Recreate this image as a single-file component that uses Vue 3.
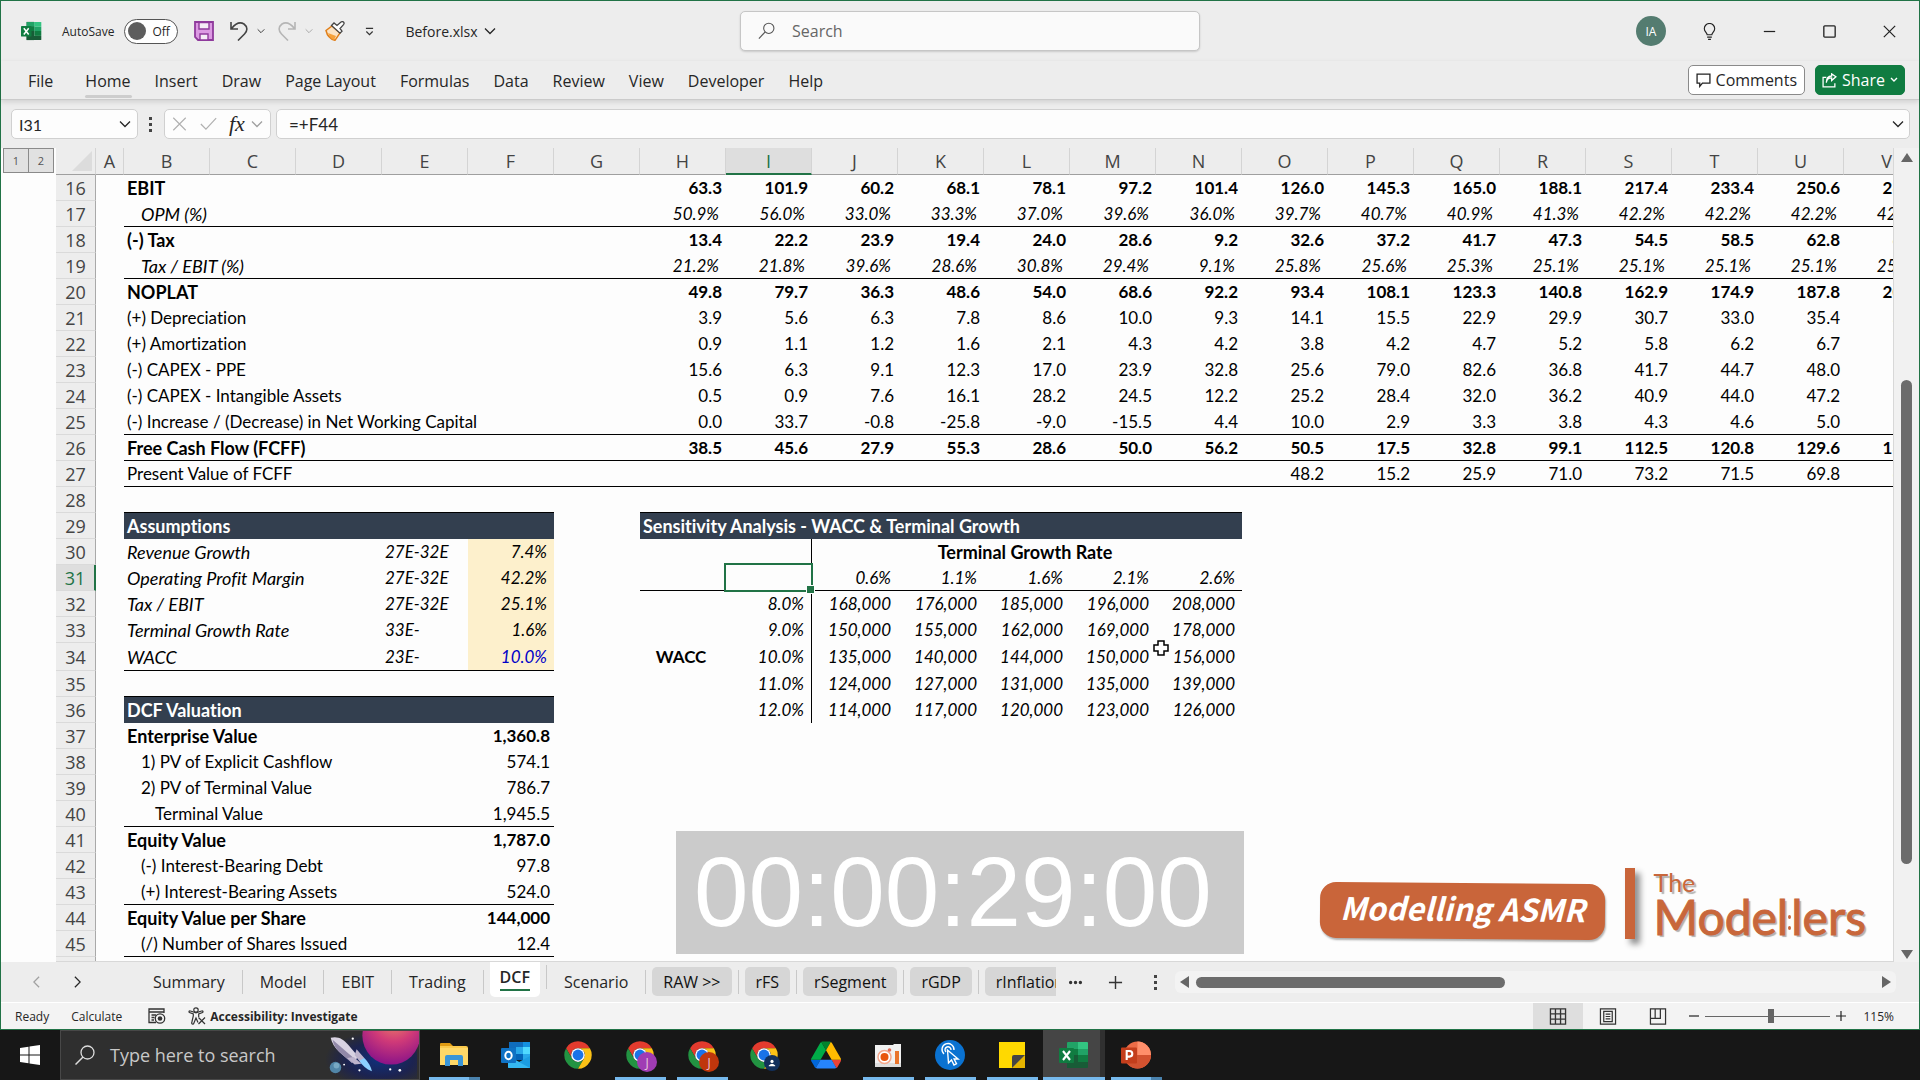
<script setup>
import { ref } from 'vue'

const autoSave = ref(false)
const search = ref('')
const cellName = ref('I31')
const formula = ref('=+F44')
const zoom = ref(115)

const menus = ['File', 'Home', 'Insert', 'Draw', 'Page Layout', 'Formulas', 'Data', 'Review', 'View', 'Developer', 'Help']

const sheets = [
  { name: 'Summary' },
  { name: 'Model' },
  { name: 'EBIT' },
  { name: 'Trading' },
  { name: 'DCF', active: true },
  { name: 'Scenario' },
  { name: 'RAW >>', raw: true },
  { name: 'rFS', raw: true },
  { name: 'rSegment', raw: true },
  { name: 'rGDP', raw: true },
  { name: 'rInflation', raw: true }
]

const apps = [
  { icon: 'explorer', label: 'File Explorer', running: true, stacked: true },
  { icon: 'outlook', label: 'Outlook' },
  { icon: 'chrome', label: 'Chrome' },
  { icon: 'chrome', label: 'Chrome profile 1', running: true, badge: 'J', color: 'purple' },
  { icon: 'chrome', label: 'Chrome profile 2', running: true, badge: 'J', color: 'rust' },
  { icon: 'chrome', label: 'Chrome profile 3', person: true },
  { icon: 'drive', label: 'Google Drive' },
  { icon: 'recorder', label: 'Screen recorder', running: true },
  { icon: 'clicker', label: 'Click tool', running: true },
  { icon: 'notes', label: 'Sticky Notes', running: true },
  { icon: 'excel', label: 'Excel', running: true, active: true },
  { icon: 'ppt', label: 'PowerPoint', running: true, stacked: true }
]

const columns = 'ABCDEFGHIJKLMNOPQRSTUV'.split('')
const series = columns.slice(7)
const between = (col, a, b) => col >= a && col <= b

function line(n, label, values, opts = {}) {
  const cells = { B: label }
  const start = series.length - values.length
  values.forEach((v, i) => { cells[series[start + i]] = v })
  return { n, cells, ...opts }
}

const rows = [
  line(16, 'EBIT', ['63.3', '101.9', '60.2', '68.1', '78.1', '97.2', '101.4', '126.0', '145.3', '165.0', '188.1', '217.4', '233.4', '250.6', '268.8'], { bold: true }),
  line(17, 'OPM (%)', ['50.9%', '56.0%', '33.0%', '33.3%', '37.0%', '39.6%', '36.0%', '39.7%', '40.7%', '40.9%', '41.3%', '42.2%', '42.2%', '42.2%', '42.2%'], { italic: true, indent: 1, rule: 'full' }),
  line(18, '(-) Tax', ['13.4', '22.2', '23.9', '19.4', '24.0', '28.6', '9.2', '32.6', '37.2', '41.7', '47.3', '54.5', '58.5', '62.8', '67.4'], { bold: true }),
  line(19, 'Tax / EBIT (%)', ['21.2%', '21.8%', '39.6%', '28.6%', '30.8%', '29.4%', '9.1%', '25.8%', '25.6%', '25.3%', '25.1%', '25.1%', '25.1%', '25.1%', '25.1%'], { italic: true, indent: 1, rule: 'full' }),
  line(20, 'NOPLAT', ['49.8', '79.7', '36.3', '48.6', '54.0', '68.6', '92.2', '93.4', '108.1', '123.3', '140.8', '162.9', '174.9', '187.8', '201.4'], { bold: true }),
  line(21, '(+) Depreciation', ['3.9', '5.6', '6.3', '7.8', '8.6', '10.0', '9.3', '14.1', '15.5', '22.9', '29.9', '30.7', '33.0', '35.4', '38.0']),
  line(22, '(+) Amortization', ['0.9', '1.1', '1.2', '1.6', '2.1', '4.3', '4.2', '3.8', '4.2', '4.7', '5.2', '5.8', '6.2', '6.7', '7.2']),
  line(23, '(-) CAPEX - PPE', ['15.6', '6.3', '9.1', '12.3', '17.0', '23.9', '32.8', '25.6', '79.0', '82.6', '36.8', '41.7', '44.7', '48.0', '51.5']),
  line(24, '(-) CAPEX - Intangible Assets', ['0.5', '0.9', '7.6', '16.1', '28.2', '24.5', '12.2', '25.2', '28.4', '32.0', '36.2', '40.9', '44.0', '47.2', '50.7']),
  line(25, '(-) Increase / (Decrease) in Net Working Capital', ['0.0', '33.7', '-0.8', '-25.8', '-9.0', '-15.5', '4.4', '10.0', '2.9', '3.3', '3.8', '4.3', '4.6', '5.0', '5.3'], { rule: 'full' }),
  line(26, 'Free Cash Flow (FCFF)', ['38.5', '45.6', '27.9', '55.3', '28.6', '50.0', '56.2', '50.5', '17.5', '32.8', '99.1', '112.5', '120.8', '129.6', '139.1'], { bold: true, rule: 'full' }),
  line(27, 'Present Value of FCFF', ['48.2', '15.2', '25.9', '71.0', '73.2', '71.5', '69.8', '68.1'], { rule: 'full' }),
  { n: 28, cells: {}, rule: 'both' },
  { n: 29, cells: { B: 'Assumptions', H: 'Sensitivity Analysis - WACC & Terminal Growth' }, band: 'both' },
  { n: 30, cells: { B: 'Revenue Growth', E: '27E-32E', F: '7.4%', J: 'Terminal Growth Rate' }, italic: true },
  { n: 31, cells: { B: 'Operating Profit Margin', E: '27E-32E', F: '42.2%', J: '0.6%', K: '1.1%', L: '1.6%', M: '2.1%', N: '2.6%' }, italic: true, rule: 'right' },
  { n: 32, cells: { B: 'Tax / EBIT', E: '27E-32E', F: '25.1%', I: '8.0%', J: '168,000', K: '176,000', L: '185,000', M: '196,000', N: '208,000' }, italic: true },
  { n: 33, cells: { B: 'Terminal Growth Rate', E: '33E-', F: '1.6%', I: '9.0%', J: '150,000', K: '155,000', L: '162,000', M: '169,000', N: '178,000' }, italic: true },
  { n: 34, cells: { B: 'WACC', E: '23E-', F: '10.0%', H: 'WACC', I: '10.0%', J: '135,000', K: '140,000', L: '144,000', M: '150,000', N: '156,000' }, italic: true, rule: 'left', tall: true },
  { n: 35, cells: { I: '11.0%', J: '124,000', K: '127,000', L: '131,000', M: '135,000', N: '139,000' }, italic: true, rule: 'left' },
  { n: 36, cells: { B: 'DCF Valuation', I: '12.0%', J: '114,000', K: '117,000', L: '120,000', M: '123,000', N: '126,000' }, italic: true, band: 'left' },
  { n: 37, cells: { B: 'Enterprise Value', F: '1,360.8' }, bold: true },
  { n: 38, cells: { B: '1) PV of Explicit Cashflow', F: '574.1' }, indent: 1 },
  { n: 39, cells: { B: '2) PV of Terminal Value', F: '786.7' }, indent: 1 },
  { n: 40, cells: { B: 'Terminal Value', F: '1,945.5' }, indent: 2, rule: 'left' },
  { n: 41, cells: { B: 'Equity Value', F: '1,787.0' }, bold: true },
  { n: 42, cells: { B: '(-) Interest-Bearing Debt', F: '97.8' }, indent: 1 },
  { n: 43, cells: { B: '(+) Interest-Bearing Assets', F: '524.0' }, indent: 1, rule: 'left' },
  { n: 44, cells: { B: 'Equity Value per Share', F: '144,000' }, bold: true },
  { n: 45, cells: { B: '(/) Number of Shares Issued', F: '12.4' }, indent: 1, rule: 'left' },
  { n: 46, cells: {} }
]

// the growth-rate caption on row 30 is merged across J:N
const rowColumns = (row) => columns.filter((c) => !(row.n === 30 && between(c, 'K', 'N')))

function inBlock(kind, col) {
  if (kind === 'full') return col >= 'B'
  const left = between(col, 'B', 'F')
  const right = between(col, 'H', 'N')
  return (kind === 'left' && left) || (kind === 'right' && right) || (kind === 'both' && (left || right))
}

function cellClass(row, col) {
  const band = inBlock(row.band, col)
  const caption = (row.n === 30 && col === 'J') || (row.n === 34 && col === 'H')
  return {
    label: (col === 'B' && (row.bold || row.italic)) || band || (caption && col === 'J'),
    bold: row.bold || band || caption,
    italic: row.italic && !band && !caption,
    num: !['B', 'E'].includes(col) && !band && !caption,
    spaced: row.italic && col >= 'F',
    caption,
    band,
    rule: inBlock(row.rule, col),
    divider: col === 'I' && between(row.n, 30, 36),
    input: col === 'F' && between(row.n, 30, 34),
    blue: col === 'F' && row.n === 34,
    indent1: col === 'B' && row.indent === 1,
    indent2: col === 'B' && row.indent === 2,
    selected: col === 'I' && row.n === 31
  }
}
</script>

<template>
  <div class="desktop">
    <svg class="defs" aria-hidden="true">
      <symbol id="chev" viewBox="0 0 12 8"><path d="M1 1.5 6 6.5 11 1.5" fill="none" stroke="currentColor" stroke-width="1.3" /></symbol>
      <symbol id="excel" viewBox="0 0 30 28">
        <path d="M8 1h11v26H8z" fill="#185c37" /><path d="M8 2a1 1 0 0 1 1-1h10v7H8z" fill="#21a366" />
        <path d="M19 1h9a1 1 0 0 1 1 1v6H19z" fill="#33c481" /><path d="M8 8h11v6H8z" fill="#107c41" /><path d="M19 8h10v6H19z" fill="#21a366" />
        <path d="M19 14h10v7H19z" fill="#107c41" /><path d="M8 21h21v5a1 1 0 0 1-1 1H9a1 1 0 0 1-1-1z" fill="#185c37" />
        <rect x="0" y="7" width="15" height="15" rx="1" fill="#107c41" />
        <path d="m4 10 7 9M11 10l-7 9" stroke="#fff" stroke-width="2.1" />
      </symbol>
      <symbol id="explorer" viewBox="0 0 30 28">
        <path d="M1 3a1 1 0 0 1 1-1h9l3 3H1z" fill="#e09b13" /><path d="M1 5h26a2 2 0 0 1 2 2v17H1z" fill="#fbc94b" />
        <path d="M1 7h28v17H1z" fill="#ffd868" /><path d="M6 25V16a2 2 0 0 1 2-2h14a2 2 0 0 1 2 2v9h-5v-6h-8v6z" fill="#3a95d8" />
      </symbol>
      <symbol id="outlook" viewBox="0 0 30 28">
        <path d="M8 1h20a1 1 0 0 1 1 1v16H8z" fill="#0f6cbd" /><path d="M15 6h7v7h-7z" fill="#28a8ea" /><path d="M22 1h7v6h-7z" fill="#1490df" />
        <path d="M22 6h7v7h-7z" fill="#50d9ff" /><path d="M15 13h7v6h-7z" fill="#0364b8" /><path d="M22 13h7v6h-7z" fill="#28a8ea" />
        <path d="M7 15l11 6 11-6v12H8a1 1 0 0 1-1-1z" fill="#1b9de2" /><path d="m7 15 22 12H8a1 1 0 0 1-1-1z" fill="#35b8f1" />
        <rect y="7" width="15" height="15" rx="1" fill="#0f72c4" /><ellipse cx="7.500" cy="14.500" rx="3.200" ry="3.700" fill="none" stroke="#fff" stroke-width="2" />
      </symbol>
      <symbol id="chrome" viewBox="0 0 48 48">
        <path d="M4.950 13A22 22 0 0 1 43.050 13H24A11 11 0 0 0 14.470 29.500z" fill="#e33b2e" />
        <path d="M4.950 13 14.470 29.500A11 11 0 0 0 33.530 29.500L24 46A22 22 0 0 1 4.950 13z" fill="#229342" />
        <path d="M43.050 13A22 22 0 0 1 24 46L33.530 29.500A11 11 0 0 0 24 13z" fill="#fbc116" />
        <circle cx="24" cy="24" r="11" fill="#fff" /><circle cx="24" cy="24" r="8.700" fill="#1a73e8" />
      </symbol>
      <symbol id="drive" viewBox="0 0 87 78">
        <path d="m6.600 66.850 3.850 6.650c.8 1.400 1.950 2.500 3.300 3.300L27.500 53H0c0 1.550.4 3.100 1.200 4.500z" fill="#0066da" />
        <path d="M43.650 25 29.900 1.200c-1.350.8-2.500 1.900-3.300 3.300L1.200 48.500A9.060 9.060 0 0 0 0 53h27.500z" fill="#00ac47" />
        <path d="M73.550 76.800c1.350-.8 2.500-1.900 3.300-3.300l9.250-16c.8-1.400 1.200-2.950 1.200-4.500H59.800l5.850 11.500z" fill="#ea4335" />
        <path d="M43.650 25 57.400 1.200C56.050.4 54.500 0 52.900 0H34.400c-1.600 0-3.150.45-4.500 1.200z" fill="#00832d" />
        <path d="M59.800 53H27.500L13.750 76.800c1.350.8 2.900 1.200 4.500 1.200h50.800c1.600 0 3.150-.45 4.500-1.200z" fill="#2684fc" />
        <path d="M73.400 26.500 60.700 4.500c-.8-1.400-1.950-2.500-3.300-3.300L43.650 25 59.800 53h27.450c0-1.550-.4-3.100-1.200-4.500z" fill="#ffba00" />
      </symbol>
      <symbol id="recorder" viewBox="0 0 30 28">
        <path d="M2 4h18l1-1h7v23H2z" fill="#f1f1f1" /><path d="M2 22h26v4H2z" fill="#ddd" />
        <circle cx="11.500" cy="16" r="6.500" fill="#fff" stroke="#f4a78c" stroke-width="1.500" /><circle cx="11.500" cy="16" r="4" fill="#e8560e" />
        <circle cx="16.500" cy="9" r="1.800" fill="#e26a54" /><path d="M22 10h4v13h-4z" fill="#e9742b" />
      </symbol>
      <symbol id="clicker" viewBox="0 0 30 30">
        <circle cx="15" cy="15" r="15" fill="#0a72d1" />
        <path d="M9 14a6 6 0 1 1 10-4M11 12a3 3 0 1 1 5-2" fill="none" stroke="#fff" stroke-width="1.400" />
        <path d="m12.500 10 1 13 3-3 2.500 5 2.500-1.200-2.400-4.800h4z" fill="#0a72d1" stroke="#fff" stroke-width="1.400" />
      </symbol>
      <symbol id="notes" viewBox="0 0 30 28"><path d="M2 1h26v14L17 27H2z" fill="#ffd900" /><path d="M28 14v13H15z" fill="#e5b400" /><path d="M28 14H17a2 2 0 0 0-2 2v11z" fill="#454545" /></symbol>
      <symbol id="ppt" viewBox="0 0 30 30">
        <circle cx="16.500" cy="15" r="13.500" fill="#ed6c47" /><path d="M16.500 1.500A13.500 13.500 0 0 1 30 15H16.500z" fill="#ff8f6b" /><path d="M3 15h27a13.500 13.500 0 0 1-27 0z" fill="#d35230" />
        <rect y="7.500" width="16" height="16" rx="1" fill="#c43e1c" /><path d="M5.700 20v-9H8.500a2.600 2.600 0 0 1 0 5.600H6" fill="none" stroke="#fff" stroke-width="2.100" />
      </symbol>
    </svg>

    <div class="window">
      <header class="titlebar">
        <div class="quick">
          <svg class="logo"><use href="#excel" /></svg>
          <label class="autosave">
            <span>AutoSave</span>
            <span class="switch"><input v-model="autoSave" type="checkbox"><span>Off</span></span>
          </label>
          <button class="tool save" aria-label="Save">
            <svg viewBox="0 0 20 20"><path d="M1 1h18v18H4l-3-3z" fill="#dc9ae3" stroke="#8f3a9c" stroke-width="1.800" /><path d="M5 1.500h10V8H5z" fill="#f6ecf7" stroke="#8f3a9c" stroke-width="1.400" /><path d="M6 13h8v6H6z" fill="#f6ecf7" stroke="#8f3a9c" stroke-width="1.400" /></svg>
          </button>
          <button class="tool undo" aria-label="Undo"><svg viewBox="0 0 20 20"><path d="M2 1v7h7M2.500 7.500C7 2 11 .5 15 3c4 3 3.500 7 .5 10L9 19.500" fill="none" stroke="#444" stroke-width="1.600" /></svg></button>
          <button class="more" aria-label="Undo history"><svg><use href="#chev" /></svg></button>
          <button class="tool redo" aria-label="Redo"><svg viewBox="0 0 20 20"><path d="M18 1v7h-7M17.500 7.500C13 2 9 .5 5 3 1 6 1.500 10 4.500 13l6.500 6.500" fill="none" stroke="#b5b5b5" stroke-width="1.600" /></svg></button>
          <button class="more faded" aria-label="Redo history"><svg><use href="#chev" /></svg></button>
          <button class="tool brush" aria-label="Format Painter">
            <svg viewBox="0 0 20 20"><path d="m7 5 8 7-5 7.300C5 18 2 14 1 9.500z" fill="#fbe3c4" stroke="#e07f1a" stroke-width="1.500" /><path d="m3 12 8 3-2 4c-3-1-5-4-6-7z" fill="#f6a13a" /><path d="M6.500 4.500 9 2l3 2.500L16 1q2-1 2.800.4.700 1-.3 2.200L15 7.500l2 2.700-2 2z" fill="#fff" stroke="#444" stroke-width="1.300" /></svg>
          </button>
          <button class="more customise" aria-label="Customise toolbar"><svg viewBox="0 0 10 10"><path d="M1 1.500h8M1.500 5 5 8.500 8.500 5" fill="none" stroke="#333" stroke-width="1.300" /></svg></button>
          <button class="filename">Before.xlsx <svg><use href="#chev" /></svg></button>
        </div>
        <label class="search">
          <svg viewBox="0 0 20 20"><circle cx="12" cy="7" r="5.700" fill="none" stroke="#555" stroke-width="1.200" /><path d="m8 11-7 7.500" stroke="#555" stroke-width="1.300" /></svg>
          <input v-model="search" type="text" placeholder="Search" aria-label="Search">
        </label>
        <div class="controls">
          <button class="avatar">IA</button>
          <button class="control" aria-label="Tips"><svg viewBox="0 0 18 18"><path d="M6.500 12.500c0-2-3-3.500-3-6.500a5.500 5.500 0 0 1 11 0c0 3-3 4.500-3 6.500zM6.500 15h5M7.500 17.300h3" fill="none" stroke="#222" stroke-width="1.200" /></svg></button>
          <button class="control" aria-label="Minimise"><svg viewBox="0 0 18 18"><path d="M3 9h12" stroke="#222" stroke-width="1.300" /></svg></button>
          <button class="control" aria-label="Maximise"><svg viewBox="0 0 18 18"><rect x="3" y="3" width="12" height="12" rx="1" fill="none" stroke="#222" stroke-width="1.400" /></svg></button>
          <button class="control" aria-label="Close"><svg viewBox="0 0 18 18"><path d="m3 3 12 12M15 3 3 15" stroke="#222" stroke-width="1.300" /></svg></button>
        </div>
      </header>

      <nav class="ribbon">
        <button v-for="m in menus" :key="m" class="menu" :class="{ current: m === 'Home' }">{{ m }}</button>
        <span class="grow"></span>
        <button class="comments"><svg viewBox="0 0 14 14"><path d="M1 1h12v8.500H6L3.500 12.500v-3H1z" fill="none" stroke="#222" stroke-width="1.200" /></svg>Comments</button>
        <button class="share">
          <svg viewBox="0 0 14 14"><path d="M4 4H1v9h11V9.500M4 9c.3-3 2-4.500 5-4.500V7l4-3.500L9 .8v2C5.500 3 4 5.500 4 9z" fill="none" stroke="#fff" stroke-width="1.200" /></svg>Share
          <svg class="small" viewBox="0 0 8 6"><path d="m1 1 3 3 3-3" fill="none" stroke="#fff" stroke-width="1.400" /></svg>
        </button>
      </nav>

      <div class="formula-bar">
        <div class="box name-box"><input v-model="cellName" type="text" aria-label="Name box"><button aria-label="Name list"><svg><use href="#chev" /></svg></button></div>
        <span class="dots"><i></i><i></i><i></i></span>
        <div class="box fx-box">
          <button aria-label="Cancel"><svg viewBox="0 0 18 18"><path d="m2 2 14 14M16 2 2 16" stroke="#b0b0b0" stroke-width="1.300" /></svg></button>
          <button aria-label="Enter"><svg viewBox="0 0 20 18"><path d="m1 9 6 6L19 2" fill="none" stroke="#b0b0b0" stroke-width="1.400" /></svg></button>
          <button class="fx">fx</button>
          <button class="faded" aria-label="Functions"><svg class="tiny"><use href="#chev" /></svg></button>
        </div>
        <div class="box formula-box"><input v-model="formula" type="text" aria-label="Formula"><button aria-label="Expand"><svg><use href="#chev" /></svg></button></div>
      </div>

      <main class="sheet">
        <div class="outline"><button>1</button><button>2</button></div>
        <div class="grid">
          <table>
            <colgroup><col class="c-head"><col class="c-a"><col v-for="c in columns.slice(1)" :key="c" class="c-data"></colgroup>
            <thead>
              <tr>
                <th class="corner"><svg viewBox="0 0 20 20"><path d="M20 0v20H0z" fill="#dcdcdc" /></svg></th>
                <th v-for="c in columns" :key="c" scope="col" :class="{ picked: c === 'I' }">{{ c }}</th>
              </tr>
            </thead>
            <tbody>
              <tr v-for="row in rows" :key="row.n" :class="{ tall: row.tall }">
                <th scope="row" :class="{ picked: row.n === 31 }">{{ row.n }}</th>
                <td v-for="c in rowColumns(row)" :key="c" :class="cellClass(row, c)" :colspan="row.n === 30 && c === 'J' ? 5 : 1">{{ row.cells[c] }}<span v-if="c === 'I' && row.n === 31" class="cursor-box"></span></td>
              </tr>
            </tbody>
          </table>
        </div>
        <div class="vscroll"><i class="up"></i><div class="vtrack"><div class="vthumb"></div></div><i class="down"></i></div>
      </main>

      <div class="sheetbar">
        <button class="arrow faded" aria-label="Previous sheets"><svg viewBox="0 0 8 14"><path d="M7 1 1 7l6 6" fill="none" stroke="currentColor" stroke-width="1.400" /></svg></button>
        <button class="arrow" aria-label="Next sheets"><svg viewBox="0 0 8 14"><path d="m1 1 6 6-6 6" fill="none" stroke="currentColor" stroke-width="1.400" /></svg></button>
        <div class="tabs">
          <button v-for="s in sheets" :key="s.name" class="tab" :class="{ active: s.active, raw: s.raw }"><span>{{ s.name }}</span></button>
        </div>
        <button class="bar-btn" aria-label="All sheets"><svg viewBox="0 0 16 16"><path d="M1 8a1.800 1.800 0 1 0 3.600 0A1.800 1.800 0 1 0 1 8m5.200 0a1.800 1.800 0 1 0 3.600 0 1.800 1.800 0 1 0-3.600 0m5.200 0a1.800 1.800 0 1 0 3.600 0 1.800 1.800 0 1 0-3.600 0" fill="#333" /></svg></button>
        <button class="bar-btn" aria-label="New sheet"><svg viewBox="0 0 16 16"><path d="M8 1v14M1 8h14" stroke="#333" stroke-width="1.500" /></svg></button>
        <span class="dots"><i></i><i></i><i></i></span>
        <div class="hscroll"><i class="left"></i><div class="htrack"><div class="hthumb"></div></div><i class="right"></i></div>
      </div>

      <footer class="status">
        <span class="ready">Ready</span>
        <span class="calc">Calculate</span>
        <button class="macro" aria-label="Record macro"><svg viewBox="0 0 18 16"><path d="M8 14.500H1V1h15v4M1 4h15M3.500 7H8M3.500 9.500h3M3.500 12H6" fill="none" stroke="#333" stroke-width="1.300" /><circle cx="12" cy="10.500" r="4.700" fill="#f3f3f3" stroke="#333" stroke-width="1.300" /><circle cx="12" cy="10.500" r="2.300" fill="#333" /></svg></button>
        <button class="access"><svg viewBox="0 0 18 18"><circle cx="8" cy="3" r="2.200" fill="none" stroke="#333" stroke-width="1.200" /><path d="M10 15.500 8 11l-2.500 6c-2 .4-2-1-1.500-2.500L5.300 9V7L1.500 5.500C.5 4.500 1.300 3.500 2.500 4L8 5.800 13.500 4c1.200-.5 2 .5 1 1.500L10.700 7v3M10.500 10.500l6.500 6.500m0-6.500L10.500 17" fill="none" stroke="#333" stroke-width="1.200" /></svg>Accessibility: Investigate</button>
        <span class="grow"></span>
        <button class="view on" aria-label="Normal view"><svg viewBox="0 0 18 18"><path d="M1 1h16v16H1zM6.300 1v16M11.700 1v16M1 6.300h16M1 11.700h16" fill="none" stroke="#333" stroke-width="1.400" /></svg></button>
        <button class="view" aria-label="Page layout view"><svg viewBox="0 0 18 18"><path d="M1 1h16v16H1zM4.500 3.500h9v11h-9zM6.500 6.500h5M6.500 9h5M6.500 11.500h5" fill="none" stroke="#333" stroke-width="1.300" /></svg></button>
        <button class="view" aria-label="Page break view"><svg viewBox="0 0 18 18"><path d="M1 1h16v16H1zM1 11h10.500V1M6 1v10" fill="none" stroke="#333" stroke-width="1.300" /></svg></button>
        <button class="step" aria-label="Zoom out"><svg viewBox="0 0 10 10"><path d="M0 5h10" stroke="#222" stroke-width="1.200" /></svg></button>
        <input v-model="zoom" class="zoom" type="range" min="10" max="210" aria-label="Zoom">
        <button class="step" aria-label="Zoom in"><svg viewBox="0 0 10 10"><path d="M0 5h10M5 0v10" stroke="#222" stroke-width="1.200" /></svg></button>
        <span class="percent">115%</span>
      </footer>
    </div>

    <div class="taskbar">
      <button class="start" aria-label="Start"><svg viewBox="0 0 20 20"><path d="M0 3 8.500 1.800v7.700H0zM9.500 1.600 20 0v9.500H9.500zM0 10.500h8.500v7.700L0 17zM9.500 10.500H20V20L9.500 18.400z" fill="#fff" /></svg></button>
      <button class="tsearch">
        <svg class="lens" viewBox="0 0 20 20"><circle cx="12.500" cy="7.500" r="6.500" fill="none" stroke="#ddd" stroke-width="1.300" /><path d="m8 12-7.500 7.500" stroke="#ddd" stroke-width="1.500" /></svg>
        <span>Type here to search</span>
        <svg class="art" viewBox="0 0 96 50">
          <defs>
            <radialGradient id="sky" cx=".6" cy=".6" r=".6"><stop offset="0" stop-color="#10307c" /><stop offset=".6" stop-color="#1c2350" /><stop offset="1" stop-color="#2f2f2f" /></radialGradient>
            <radialGradient id="planet" cx=".55" cy=".2" r=".8"><stop offset="0" stop-color="#f08a62" /><stop offset=".5" stop-color="#d03a78" /><stop offset="1" stop-color="#8c1488" /></radialGradient>
          </defs>
          <path d="M0 0h96v50H0z" fill="url(#sky)" /><circle cx="69" cy="5" r="30" fill="url(#planet)" />
          <circle cx="11" cy="38" r="6" fill="#5186a8" /><circle cx="12" cy="36" r="3" fill="#78a9c4" />
          <path d="M6 7c7-2 13 1 18 7l11 13-7 6L15 22C10 17 7 12 6 7z" fill="#d8d2e2" /><path d="m8 9 24 21-4 3-13-11C11 18 9 14 8 9z" fill="#9188a8" />
          <path d="m33 19 8 9-3 6-7-9zM23 28l8 7 7-1-8-7z" fill="#bdb3cc" /><path d="m36 31 5-3c4 4 7 9 8 14-6-2-10-6-13-11z" fill="#8cd0ff" />
          <circle cx="29" cy="8" r="1.200" fill="#fff" /><circle cx="36" cy="41" r="1.200" fill="#fff" /><circle cx="68" cy="40" r="1.200" fill="#fff" /><circle cx="78" cy="41" r="1.400" fill="#fff" /><circle cx="20" cy="35" r="1" fill="#fff" />
        </svg>
      </button>
      <button v-for="a in apps" :key="a.label" class="app" :class="{ running: a.running, active: a.active, stacked: a.stacked }" :aria-label="a.label">
        <svg class="app-icon"><use :href="'#' + a.icon" /></svg>
        <span v-if="a.badge" class="badge" :class="a.color">{{ a.badge }}</span>
        <span v-if="a.person" class="badge navy"><svg viewBox="0 0 10 10"><circle cx="5" cy="3" r="2" fill="#fff" /><path d="M1 9V8q4-4 8 0v1z" fill="#fff" /></svg></span>
      </button>
    </div>

    <div class="timer">00:00:29:00</div>

    <div class="brand">
      <span class="pill">Modelling ASMR</span>
      <span class="post"></span>
      <div class="wordmark">
        <span class="the">The</span>
        <span class="name">Model<span class="pips"><i></i><i></i></span>lers</span>
      </div>
    </div>

    <svg class="pointer" viewBox="0 0 16 16"><path d="M5 1h6v4h4v6h-4v4H5v-4H1V5h4z" fill="#fff" stroke="#000" stroke-width="1.500" /></svg>
  </div>
</template>

<style>
body {
  margin: 0;
  background: #171717;
}
</style>

<style scoped>
.desktop {
  position: relative;
  display: flex;
  flex-direction: column;
  height: 100vh;
  overflow: hidden;
  font-family: "Open Sans", "Noto Sans", sans-serif;
  font-size: 16px;
  font-variant-ligatures: none;
  color: #262626;
}

.desktop * {
  box-sizing: border-box;
}

.defs {
  position: absolute;
  width: 0;
  height: 0;
}

button {
  display: flex;
  align-items: center;
  justify-content: center;
  flex: none;
  padding: 0;
  border: 0;
  background: none;
  font: inherit;
  color: inherit;
}

input {
  margin: 0;
  min-width: 0;
  border: 0;
  background: none;
  font: inherit;
  color: inherit;
}

svg {
  display: block;
  flex: none;
}

.grow {
  flex: 1;
}

.window {
  flex: 1;
  min-height: 0;
  display: flex;
  flex-direction: column;
  border: 1px solid #217346;
  background: #ededed;
}

.titlebar {
  display: grid;
  grid-template-columns: 1fr 460px 1fr;
  align-items: center;
  height: 60px;
  padding-left: 20px;
  flex: none;
}

.quick {
  display: flex;
  align-items: center;
}

.logo {
  width: 21px;
  height: 20px;
}

.autosave {
  display: flex;
  align-items: center;
  gap: 10px;
  margin-left: 20px;
  font-size: 12px;
}

.switch {
  display: flex;
  align-items: center;
  gap: 6px;
  width: 54px;
  height: 25px;
  padding-left: 3px;
  border: 1px solid #555;
  border-radius: 13px;
  background: #fff;
}

.switch input {
  appearance: none;
  width: 18px;
  height: 18px;
  border-radius: 50%;
  background: #5d5d5d;
}

.tool {
  width: 20px;
  height: 20px;
}

.tool svg {
  width: 20px;
  height: 20px;
}

.save {
  margin-left: 16px;
}

.undo {
  margin-left: 15px;
}

.more {
  margin-left: 8px;
}

.more svg {
  width: 8px;
  height: 8px;
}

.redo {
  margin-left: 12px;
}

.brush {
  margin-left: 12px;
}

.faded {
  color: #a0a0a0;
}

.customise {
  margin-left: 20px;
}

.customise svg {
  width: 9px;
  height: 9px;
}

.filename {
  gap: 6px;
  margin-left: 31px;
  font-size: 14px;
}

.filename svg {
  width: 12px;
  height: 8px;
}

.search {
  display: flex;
  align-items: center;
  gap: 14px;
  height: 40px;
  padding: 0 17px;
  border: 1px solid #c6c6c6;
  border-radius: 5px;
  background: #fafafa;
  box-shadow: 0 1px 2px rgba(0, 0, 0, 0.15);
}

.search svg {
  width: 18px;
  height: 18px;
}

.search input {
  flex: 1;
}

.search input::placeholder {
  color: #666;
  opacity: 1;
}

.controls {
  display: flex;
  align-items: center;
  justify-content: flex-end;
}

.avatar {
  width: 30px;
  height: 30px;
  margin-right: 13px;
  border-radius: 50%;
  background: #547c70;
  color: #fff;
  font-size: 12px;
}

.control {
  width: 60px;
  height: 40px;
}

.control svg {
  width: 17px;
  height: 17px;
}

.ribbon {
  position: relative;
  display: flex;
  align-items: center;
  height: 39px;
  padding: 0 14px 0 15px;
  flex: none;
  border-bottom: 1px solid #cbcbcb;
  box-shadow: 0 2px 5px rgba(0, 0, 0, 0.12);
}

.menu {
  position: relative;
  height: 36px;
  padding: 1px 12px 0;
}

.menu:first-child {
  margin-right: 8px;
}

.current::after {
  content: "";
  position: absolute;
  left: 12px;
  right: 11px;
  bottom: 0;
  height: 3px;
  border-radius: 2px;
  background: #cdcdcd;
}

.comments,
.share {
  gap: 5px;
  height: 30px;
  padding: 0 7px;
  border: 1px solid #8a8a8a;
  border-radius: 5px;
  background: #fff;
}

.share {
  margin-left: 10px;
  padding: 0 6px;
  border-color: #107c41;
  background: #107c41;
  color: #fff;
}

.comments svg,
.share svg {
  width: 15px;
  height: 15px;
}

.share .small {
  width: 8px;
  height: 6px;
}

.formula-bar {
  display: flex;
  align-items: center;
  height: 48px;
  padding: 0 9px 0 10px;
  flex: none;
  font-family: Lato, "Open Sans", sans-serif;
}

.box {
  display: flex;
  align-items: center;
  height: 30px;
  border: 1px solid #d0d0d0;
  border-radius: 5px;
  background: #fdfdfd;
}

.box svg {
  width: 12px;
  height: 8px;
}

.name-box {
  width: 127px;
  padding: 0 6px 0 7px;
}

.name-box input,
.formula-box input {
  flex: 1;
  padding: 0;
}

.dots {
  display: flex;
  flex-direction: column;
  gap: 3px;
  flex: none;
}

.dots i {
  width: 3px;
  height: 3px;
  background: #444;
}

.formula-bar .dots {
  margin: 0 12px 0 11px;
}

.fx-box {
  gap: 12px;
  width: 107px;
  padding: 0 2px 0 6px;
}

.fx-box svg {
  width: 17px;
  height: 16px;
}

.fx-box .tiny {
  width: 12px;
  height: 8px;
}

.fx-box .fx {
  margin-right: -6px;
  font: italic 22px/24px "Liberation Serif", serif;
}

.formula-box {
  flex: 1;
  margin-left: 5px;
  padding: 0 5px 0 12px;
  font-size: 17px;
}

.sheet {
  flex: 1;
  min-height: 0;
  display: flex;
}

.outline {
  display: flex;
  width: 55px;
  padding: 0 2px;
  flex: none;
  background: #fdfdfd;
}

.outline button {
  width: 26px;
  height: 25px;
  margin-right: -1px;
  border: 1px solid #8a8a8a;
  background: #e1e1e1;
  font-size: 11px;
  color: #555;
}

.grid {
  flex: 1;
  min-width: 0;
  overflow: hidden;
  background: #fdfdfd;
  border-right: 1px solid #d8d8d8;
  border-bottom: 1px solid #d8d8d8;
}

table {
  table-layout: fixed;
  width: calc(68px + 21 * 86px);
  border-spacing: 0;
}

.c-head {
  width: 40px;
}

.c-a {
  width: 28px;
}

.c-data {
  width: 86px;
}

th {
  padding: 0;
  background: #ededed;
  color: #444;
  font-weight: 400;
  font-size: 18px;
  line-height: 24px;
}

thead th {
  height: 27px;
  border-right: 1px solid #d4d4d4;
  border-bottom: 1px solid #9f9f9f;
}

.corner svg {
  width: 20px;
  height: 20px;
  margin-left: 16px;
}

tbody th {
  height: 26px;
  border-right: 1px solid #a9a9a9;
  border-bottom: 1px solid #dadada;
}

.tall th {
  height: 28px;
}

thead .picked {
  background: #dedede;
  color: #217346;
  border-bottom: 2px solid #217346;
}

tbody .picked {
  background: #dedede;
  color: #217346;
  border-right: 2px solid #217346;
}

td {
  padding: 0 4px 0 3px;
  font-family: Lato, "Open Sans", sans-serif;
  font-size: 17px;
  line-height: 24px;
  color: #000;
  white-space: nowrap;
}

.label {
  font-size: 18px;
}

.bold {
  font-weight: 700;
}

.italic {
  font-style: italic;
}

.num {
  text-align: right;
}

.spaced {
  padding-right: 7px;
}

.caption {
  text-align: center;
}

.band {
  background: #333f4f;
  color: #fff;
}

.rule {
  border-bottom: 1px solid #000;
}

.divider {
  border-right: 1px solid #000;
}

.input {
  background: #fdf0cc;
}

.blue {
  color: #0000c8;
}

.indent1 {
  padding-left: 17px;
}

.indent2 {
  padding-left: 31px;
}

.selected {
  position: relative;
}

.cursor-box {
  position: absolute;
  inset: -2px;
  border: 2px solid #217346;
}

.cursor-box::after {
  content: "";
  position: absolute;
  right: -4px;
  bottom: -4px;
  width: 7px;
  height: 7px;
  background: #217346;
  border: 1px solid #fdfdfd;
}

.vscroll {
  display: flex;
  flex-direction: column;
  align-items: center;
  width: 25px;
  padding: 5px 0 3px;
  flex: none;
  background: #f1f1f1;
}

.up,
.down {
  border: 6px solid transparent;
}

.up {
  border-top: 0;
  border-bottom: 9px solid #666;
}

.down {
  border-bottom: 0;
  border-top: 9px solid #666;
}

.vtrack {
  flex: 1;
  display: flex;
  flex-direction: column;
  justify-content: flex-end;
  padding-bottom: 86px;
}

.vthumb {
  width: 11px;
  height: 69%;
  border-radius: 6px;
  background: #6c6c6c;
}

.sheetbar {
  display: flex;
  align-items: center;
  height: 40px;
  flex: none;
  padding-right: 23px;
}

.arrow {
  width: 41px;
  height: 38px;
}

.arrow:first-child {
  margin-left: 15px;
}

.arrow svg {
  width: 7px;
  height: 14px;
}

.tabs {
  display: flex;
  align-items: flex-start;
  flex: 912 1 0;
  min-width: 0;
  height: 40px;
  overflow: hidden;
  padding-left: 44px;
}

.tab {
  position: relative;
  height: 29px;
  margin: 5px 13px 0 0;
  padding: 0 11px;
  border-radius: 5px;
  line-height: 24px;
}

.tab::after {
  content: "";
  position: absolute;
  right: -7px;
  top: 3px;
  width: 1px;
  height: 24px;
  background: #c8c8c8;
}

.tab.raw {
  background: #d6d6d6;
  color: #111;
}

.tab.active {
  height: 35px;
  margin-top: 0;
  padding: 0 10px 4px;
  border-radius: 0 0 5px 5px;
  background: #fff;
  font-weight: 600;
}

.active span {
  border-bottom: 2px solid #217346;
}

.bar-btn {
  width: 40px;
  height: 38px;
}

.bar-btn svg {
  width: 15px;
  height: 15px;
}

.sheetbar .dots {
  margin: 0 18px;
}

.hscroll {
  flex: 710 1 0;
  display: flex;
  align-items: center;
  height: 22px;
  padding: 0 5px;
  border-radius: 6px;
  background: #f3f3f3;
}

.left,
.right {
  border: 6px solid transparent;
}

.left {
  border-left: 0;
  border-right: 9px solid #666;
}

.right {
  border-right: 0;
  border-left: 9px solid #666;
}

.htrack {
  flex: 1;
  padding-left: 7px;
}

.hthumb {
  width: 45%;
  height: 11px;
  border-radius: 6px;
  background: #6c6c6c;
}

.status {
  display: flex;
  align-items: center;
  height: 27px;
  flex: none;
  padding: 0 25px 0 14px;
  border-top: 1px solid #fff;
  background: #f3f3f3;
  font-size: 12px;
}

.calc {
  margin-left: 22px;
}

.macro {
  margin-left: 26px;
}

.macro svg {
  width: 18px;
  height: 16px;
}

.access {
  gap: 4px;
  margin-left: 22px;
  font-weight: 700;
}

.access svg {
  width: 18px;
  height: 18px;
}

.view {
  width: 50px;
  height: 26px;
}

.view.on {
  background: #dedede;
}

.view svg {
  width: 18px;
  height: 17px;
}

.step {
  width: 10px;
  height: 20px;
}

.view + .step {
  margin-left: 6px;
}

.step svg {
  width: 10px;
  height: 10px;
}

.zoom {
  appearance: none;
  width: 125px;
  height: 14px;
  margin: 0 6px;
  background: linear-gradient(#666, #666) center / 100% 1px no-repeat;
}

.zoom::-webkit-slider-thumb {
  appearance: none;
  width: 6px;
  height: 14px;
  background: #666;
}

.percent {
  margin-left: 17px;
}

.taskbar {
  display: flex;
  height: 50px;
  flex: none;
  background: #171717;
}

.start {
  width: 60px;
}

.start svg {
  width: 20px;
  height: 20px;
}

.tsearch {
  justify-content: flex-start;
  width: 360px;
  margin-right: 3px;
  padding-left: 14px;
  border: 1px solid #484848;
  background: #2f2f2f;
  color: #c8c8c8;
  font-size: 18px;
}

.tsearch span {
  margin-left: 15px;
}

.lens {
  width: 20px;
  height: 20px;
}

.art {
  width: 96px;
  height: 48px;
  margin-left: auto;
}

.app {
  position: relative;
  width: 62px;
}

.app-icon {
  width: 30px;
  height: 30px;
}

.app.active {
  background: linear-gradient(90deg, #454545 92%, #303030 92%);
}

.running::after {
  content: "";
  position: absolute;
  left: 6px;
  right: 5px;
  bottom: 0;
  height: 3px;
  background: #76b9ed;
}

.active.running::after {
  left: 0;
  right: 0;
}

.stacked::after {
  background: linear-gradient(90deg, #76b9ed 78%, #4a82ad 78%);
}

.badge {
  position: absolute;
  left: 28px;
  top: 22px;
  display: flex;
  align-items: center;
  justify-content: center;
  width: 20px;
  height: 20px;
  border-radius: 50%;
  color: #e8c8d8;
  font-size: 12px;
}

.purple {
  background: #a03cb4;
}

.rust {
  background: #bf360c;
}

.navy {
  width: 16px;
  height: 16px;
  left: 31px;
  top: 25px;
  background: #12305c;
}

.navy svg {
  width: 8px;
  height: 8px;
}

.timer {
  position: absolute;
  left: 676px;
  top: 831px;
  padding: 0 32px 0 18px;
  background: #cbcbcb;
  color: #fff;
  font: 98px/123px "Liberation Sans", Arial, sans-serif;
}

.brand {
  position: absolute;
  right: 54px;
  top: 868px;
  display: flex;
  align-items: flex-start;
  color: #c8673b;
}

.pill {
  margin-top: 15px;
  padding: 0 20px 6px;
  border-radius: 16px;
  background: #c9653a;
  box-shadow: 1px 2px 2px rgba(0, 0, 0, 0.3);
  color: #fff;
  font: italic 700 31px/50px "Noto Sans CJK SC", "Noto Sans", sans-serif;
  transform: rotate(0.5deg);
}

.post {
  width: 10px;
  height: 71px;
  margin: 0 19px 0 20px;
  background: #c9653a;
  box-shadow: 5px 5px 6px rgba(0, 0, 0, 0.45);
}

.wordmark {
  display: flex;
  flex-direction: column;
  font-family: Lato, "Open Sans", sans-serif;
  text-shadow: 2px 2px 1px rgba(0, 0, 0, 0.3);
}

.the {
  font-size: 25px;
  line-height: 28px;
}

.name {
  font-size: 48px;
  line-height: 42px;
  -webkit-text-stroke: 1px #c8673b;
}

.pips {
  display: inline-flex;
  flex-direction: column;
  gap: 7px;
  vertical-align: middle;
}

.pips i {
  width: 3px;
  height: 4px;
  border-radius: 50%;
  background: #c8673b;
}

.pointer {
  position: absolute;
  left: 1153px;
  top: 640px;
  width: 16px;
  height: 16px;
}
</style>
